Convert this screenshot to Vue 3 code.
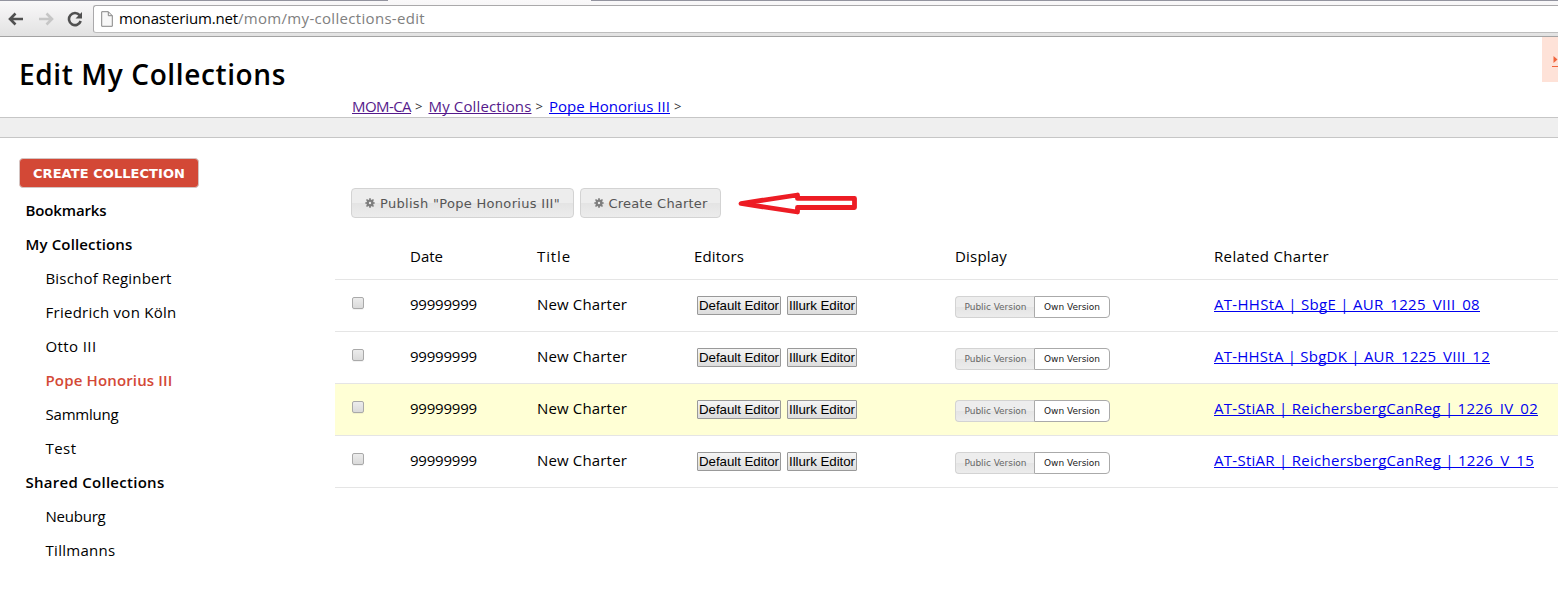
<script setup>
const groups = [
  { label: 'Bookmarks', w: 81, items: [] },
  {
    label: 'My Collections',
    w: 107,
    items: [
      { label: 'Bischof Reginbert', w: 126 },
      { label: 'Friedrich von Köln', w: 131 },
      { label: 'Otto III', w: 51 },
      { label: 'Pope Honorius III', w: 127, active: true },
      { label: 'Sammlung', w: 73 },
      { label: 'Test', w: 31 },
    ],
  },
  {
    label: 'Shared Collections',
    w: 139,
    items: [
      { label: 'Neuburg', w: 60 },
      { label: 'Tillmanns', w: 70 },
    ],
  },
]

const charters = [
  { related: 'AT-HHStA | SbgE | AUR_1225_VIII_08', w: 266 },
  { related: 'AT-HHStA | SbgDK | AUR_1225_VIII_12', w: 276 },
  { related: 'AT-StiAR | ReichersbergCanReg | 1226_IV_02', w: 324, highlighted: true },
  { related: 'AT-StiAR | ReichersbergCanReg | 1226_V_15', w: 320 },
]

// Spreads a label's letters so that it takes the given width in pixels.
const vFit = {
  mounted(el, { value }) {
    const natural = el.getBoundingClientRect().width
    el.style.letterSpacing = `${(value - natural) / el.textContent.length}px`
  },
}
</script>

<template>
  <div class="window">
    <div class="chrome">
      <div class="tabs"><i class="tab-edge left"></i><i class="tab-edge right"></i></div>
      <div class="nav">
        <svg class="nav-icon" width="16" height="14" viewBox="0 0 16 14">
          <path d="M15 7H2.5M7.5 1.5L2 7l5.5 5.500" fill="none" stroke="#505050" stroke-width="2.6" />
        </svg>
        <svg class="nav-icon forward" width="16" height="14" viewBox="0 0 16 14">
          <path d="M1 7h12.500M8.500 1.500L14 7l-5.500 5.500" fill="none" stroke="#c6c6c6" stroke-width="2.600" />
        </svg>
        <svg class="nav-icon reload" width="16" height="16" viewBox="0 0 16 16">
          <path d="M12.600 4.200A6 6 0 1 0 13.700 10" fill="none" stroke="#505050" stroke-width="2.600" />
          <path d="M15 1v6.500H8.500z" fill="#505050" />
        </svg>
        <div class="address">
          <svg width="12" height="16" viewBox="0 0 12 16">
            <path d="M.7.700h6.600l4 4v10.600H.7z" fill="#f8f8f8" stroke="#858585" />
            <path d="M7.300.700v4h4" fill="none" stroke="#858585" />
          </svg>
          <span class="url"><span v-fit="119">monasterium.net</span><span v-fit="187" class="path">/mom/my-collections-edit</span></span>
        </div>
      </div>
    </div>

    <header class="header">
      <h1><span v-fit="267">Edit My Collections</span></h1>
      <nav class="crumbs">
        <a v-fit="59" class="visited">MOM-CA</a><i>&gt;</i>
        <a v-fit="103" class="visited">My Collections</a><i>&gt;</i>
        <a v-fit="121">Pope Honorius III</a><i>&gt;</i>
      </nav>
      <div class="flap">
        <svg width="6" height="14" viewBox="0 0 6 14">
          <path d="M1.500 1l4 3.500-4 3.500z" fill="#f0643c" />
          <path d="M0 11.500h6" stroke="#f0643c" />
        </svg>
      </div>
    </header>
    <div class="band"></div>

    <div class="body">
      <aside class="sidebar">
        <button class="create"><span v-fit="152">CREATE COLLECTION</span></button>
        <template v-for="g in groups" :key="g.label">
          <div class="group"><span v-fit="g.w">{{ g.label }}</span></div>
          <div v-for="c in g.items" :key="c.label" class="item" :class="{ active: c.active }">
            <span v-fit="c.w">{{ c.label }}</span>
          </div>
        </template>
      </aside>

      <main class="main">
        <div class="actions">
          <button class="action publish">
            <svg width="10" height="10" viewBox="0 0 10 10"><path d="M5 .3v9.400M.3 5h9.400M1.500 1.500l7 7M8.500 1.500l-7 7" stroke="#7d7d7d" stroke-width="1.700" /><circle cx="5" cy="5" r="2.400" fill="#e9e9e9" stroke="#7d7d7d" stroke-width="2.400" /></svg>
            <span v-fit="180">Publish "Pope Honorius III"</span>
          </button>
          <button class="action charter">
            <svg width="10" height="10" viewBox="0 0 10 10"><path d="M5 .3v9.400M.3 5h9.400M1.500 1.500l7 7M8.500 1.500l-7 7" stroke="#7d7d7d" stroke-width="1.700" /><circle cx="5" cy="5" r="2.400" fill="#e9e9e9" stroke="#7d7d7d" stroke-width="2.400" /></svg>
            <span v-fit="99">Create Charter</span>
          </button>
          <svg class="arrow" width="120" height="24" viewBox="0 0 120 24">
            <path d="M3 12.500L59.500 4v3.400H116.500v9.100H59.500V21z" fill="#fff" stroke="#ed1c24" stroke-width="4.800" stroke-linejoin="round" />
          </svg>
        </div>

        <div class="table">
          <div class="row head">
            <span></span>
            <div><span v-fit="33">Date</span></div>
            <div><span v-fit="34">Title</span></div>
            <div><span v-fit="50">Editors</span></div>
            <div><span v-fit="52">Display</span></div>
            <div><span v-fit="115">Related Charter</span></div>
          </div>
          <div v-for="c in charters" :key="c.related" class="row" :class="{ highlighted: c.highlighted }">
            <i class="check"></i>
            <div class="text"><span v-fit="67">99999999</span></div>
            <div class="text"><span v-fit="90">New Charter</span></div>
            <div class="editors">
              <button class="default"><span v-fit="80">Default Editor</span></button>
              <button class="illurk"><span v-fit="66">Illurk Editor</span></button>
            </div>
            <div class="toggle">
              <button class="public"><span v-fit="62">Public Version</span></button>
              <button class="own"><span v-fit="56">Own Version</span></button>
            </div>
            <div class="text"><a v-fit="c.w">{{ c.related }}</a></div>
          </div>
        </div>
      </main>
    </div>
  </div>
</template>

<style>
body {
  margin: 0;
  background: #fff;
}
</style>

<style scoped>
.window {
  width: 1558px;
  height: 608px;
  overflow: hidden;
  background: #fff;
  color: #000;
  font: 15px/20px "Open Sans", "Noto Sans", sans-serif;
  white-space: nowrap;
}
.window *, .window {
  box-sizing: border-box;
}
i {
  font-style: normal;
}
button {
  margin: 0;
  padding: 0;
  display: flex;
  align-items: center;
  justify-content: center;
}
.chrome {
  height: 37px;
  background: linear-gradient(#faf9fa, #e2e2e2);
  border-bottom: 1px solid #a3a3a3;
}
.tabs {
  height: 1px;
  display: flex;
  justify-content: space-between;
}
.tab-edge {
  background: #93949f;
}
.tab-edge.left {
  width: 388px;
}
.tab-edge.right {
  width: 967px;
}
.nav {
  display: flex;
  align-items: center;
  height: 35px;
  padding-left: 8px;
}
.forward {
  margin-left: 14px;
}
.reload {
  margin-left: 13px;
}
.address {
  flex: 1;
  height: 28px;
  margin-left: 10px;
  padding-left: 7px;
  display: flex;
  align-items: center;
  background: #fff;
  border: 1px solid #aaa9ab;
  border-bottom-color: #bdbdbd;
  border-right: 0;
  border-radius: 3px 0 0 3px;
}
.url {
  margin: 0 0 2px 6px;
}
.path {
  color: #808080;
}
.header {
  height: 81px;
  display: flex;
  position: relative;
  border-bottom: 1px solid #c6c6c6;
}
h1 {
  width: 333px;
  margin: 17px 0 0 19px;
  font-size: 28px;
  line-height: 40px;
  font-weight: 600;
}
.crumbs {
  display: flex;
  margin-top: 59px;
  color: #333;
}
.crumbs i {
  width: 17.5px;
  padding-left: 4px;
  font-size: 13px;
}
a {
  color: #0000ee;
  text-decoration: underline;
  text-decoration-thickness: 1px;
  text-decoration-skip-ink: none;
  text-underline-offset: 1px;
}
.visited {
  color: #551a8b;
}
.flap {
  position: absolute;
  right: 0;
  top: 0;
  width: 16px;
  height: 45px;
  padding: 18px 0 0 10px;
  line-height: 0;
  background: #fee2d8;
}
.band {
  height: 20px;
  background: #efefef;
  border-bottom: 1px solid #c6c6c6;
}
.body {
  display: flex;
}
.sidebar {
  width: 335px;
  padding-top: 20px;
}
.create {
  width: 180px;
  height: 30px;
  margin: 0 0 5px 19px;
  border: 1px solid #d3c4c2;
  border-radius: 4px;
  background: #d34836;
  color: #fff;
  font: bold 13px "DejaVu Sans", sans-serif;
}
.group,
.item {
  height: 34px;
  padding-left: 25.5px;
  line-height: 34px;
}
.group {
  font-weight: 600;
}
.item {
  padding-left: 45.5px;
}
.item.active {
  color: #d34836;
  font-weight: 600;
}
.main {
  flex: 1;
  padding-top: 50px;
}
.actions {
  display: flex;
  height: 30px;
  padding-left: 16px;
}
.action {
  gap: 5px;
  height: 30px;
  border: 1px solid #d3d3d3;
  border-radius: 4px;
  background: linear-gradient(#ededed 0 50%, #e4e4e4 50%, #ececec);
  color: #555;
  font: 13px "DejaVu Sans", sans-serif;
}
.publish {
  width: 223px;
}
.charter {
  width: 141px;
  margin-left: 6px;
}
.arrow {
  margin: 3px 0 0 17px;
}
.table {
  margin-top: 16px;
}
.row {
  display: grid;
  grid-template-columns: 75px 127px 157px 261px 259px 1fr;
  align-items: center;
  height: 52px;
  padding-bottom: 2px;
  border-bottom: 1px solid #e5e5e5;
}
.row.head {
  height: 46px;
}
.text {
  padding-bottom: 2px;
}
.highlighted {
  background: #ffffd5;
}
.check {
  width: 12px;
  height: 12px;
  margin: 0 0 3px 17px;
  border: 1px solid #a9a9a9;
  border-radius: 2px;
  background: linear-gradient(#ececec, #dadada);
  box-shadow: 0 1px 0 #0000000d;
}
.editors {
  display: flex;
  gap: 6px;
  padding: 2px 0 0 3px;
}
.editors button {
  height: 19px;
  border: 1px solid #999;
  border-radius: 1px;
  background: linear-gradient(#f5f5f5, #dcdcdc);
  color: #000;
  font: 13.333px "Liberation Sans", Arial, sans-serif;
}
.default {
  width: 84px;
}
.illurk {
  width: 70px;
}
.toggle {
  display: flex;
  padding-top: 5px;
}
.toggle button {
  height: 22px;
  font: 9px "DejaVu Sans", sans-serif;
}
.toggle .public {
  width: 79px;
  padding-left: 1px;
  border: 1px solid #d3d3d3;
  border-right: 0;
  border-radius: 4px 0 0 4px;
  background: linear-gradient(#ededed 0 50%, #e4e4e4 50%, #ececec);
  color: #666;
}
.toggle .own {
  width: 76px;
  border: 1px solid #aaa;
  border-radius: 0 4px 4px 0;
  background: #fff;
  color: #212121;
}
</style>
